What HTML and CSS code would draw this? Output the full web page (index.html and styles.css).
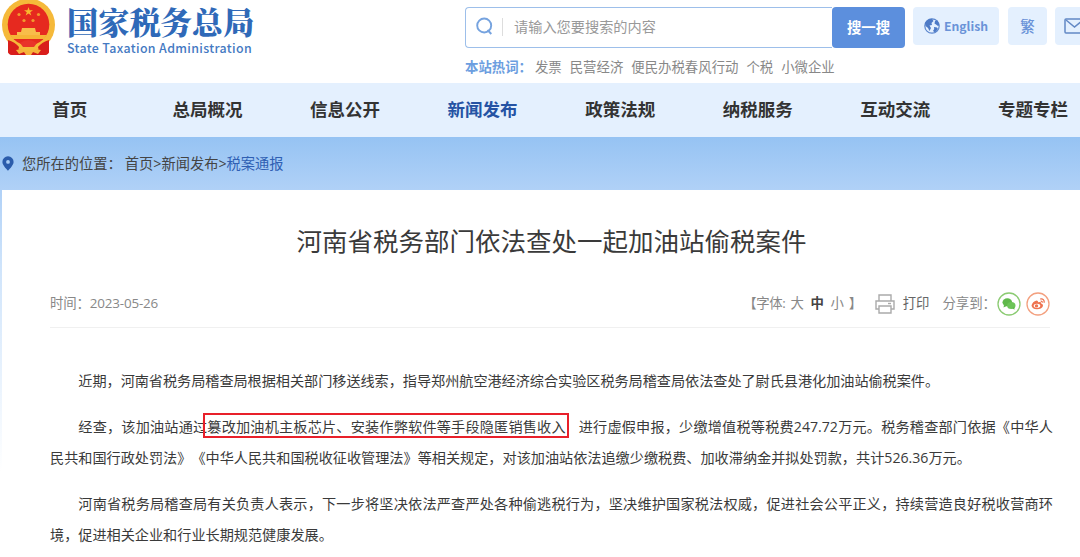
FILE: index.html
```html
<!DOCTYPE html>
<html lang="zh-CN">
<head>
    <meta charset="UTF-8" />
    <meta name="viewport" content="width=device-width, initial-scale=1.0" />
    <title>河南省税务部门依法查处一起加油站偷税案件</title>
    <link rel="stylesheet" href="styles.css">
</head>
<body>
    <header class="header">
        <a class="logo">
            <svg class="emblem" viewBox="0 0 56 56">
                <path d="M9 40 L8 52 Q9 55 14 55 H43 Q48 55 49 52 L48 40Z" fill="#cf1c1a"/>
                <circle cx="28.5" cy="25" r="26.5" fill="#f5b93a"/>
                <circle cx="28.5" cy="24.5" r="20.8" fill="#e6291f"/>
                <path d="M28.5 7l1.1 3.3h3.4l-2.8 2 1.1 3.3-2.8-2-2.8 2 1.1-3.3-2.8-2h3.4z" fill="#f9b92f"/>
                <g fill="#f29a2e">
                    <circle cx="19" cy="14.5" r="1.6"/>
                    <circle cx="38.5" cy="14.5" r="1.6"/>
                    <circle cx="24" cy="20.5" r="1.6"/>
                    <circle cx="33" cy="20.5" r="1.6"/>
                </g>
                <path d="M22 28h13l1 4h4v3H17v-3h4z" fill="#f8bd4a"/>
                <path d="M10 35h37l-3 4H13z" fill="#f6b437"/>
                <path d="M8 40q7 2 11 7l-2 8h-5q-3 0-4-3zM49 40q-7 2-11 7l2 8h5q3 0 4-3z" fill="#d91e1b"/>
                <path d="M20 43q8-6 17 0l-3 4H23z" fill="#e9342a"/>
                <path d="M16 50l6-1 2 2h9l2-2 6 1-3 4-5-2-2 3h-5l-2-3-5 2z" fill="#f6b33b"/>
            </svg>
            <span class="logo-text">
                <span class="logo-cn">国家税务总局</span>
                <span class="logo-en">State Taxation Administration</span>
            </span>
        </a>

        <div class="search">
            <div class="search-row">
                <div class="search-box">
                    <svg class="search-icon" viewBox="0 0 17 19" fill="none" stroke="#76a3df" stroke-width="1.9">
                        <circle cx="8.2" cy="8.5" r="7"/>
                        <path d="M11.5 13l3.8 4"/>
                    </svg>
                    <span class="search-hint">请输入您要搜索的内容</span>
                </div>
                <button class="search-btn">搜一搜</button>
                <a class="tool tool-en">
                    <svg class="globe" viewBox="0 0 16 16">
                        <circle cx="8" cy="8" r="7.2" fill="#e4f0fe" stroke="#5b86cd" stroke-width="1.2"/>
                        <path d="M1 5Q3 1 8 .8L9.5 3 7.5 5 8 7 5.5 7.5 7 10 5.5 13 4 10 1.5 8zM11 3l2.5-.5L15.4 7l-1.4 1-2-1.5-1.5-1zM10 9l3 .5 1 1.5-3 3.5-2-1.5 1.2-2z" fill="#4d7ac6"/>
                    </svg>
                    English
                </a>
                <a class="tool tool-fan">繁</a>
                <a class="tool tool-mail">
                    <svg class="mail" viewBox="0 0 21 16" fill="none" stroke="#6288c5" stroke-width="1.5">
                        <rect x="1" y="1" width="19" height="14" rx="1"/>
                        <path d="M2 2l8.5 7L19 2"/>
                    </svg>
                </a>
            </div>
            <div class="hot">
                <b>本站热词：</b><a>发票</a><a>民营经济</a><a>便民办税春风行动</a><a>个税</a><a>小微企业</a>
            </div>
        </div>
    </header>

    <nav class="nav">
        <a>首页</a>
        <a>总局概况</a>
        <a>信息公开</a>
        <a class="active">新闻发布</a>
        <a>政策法规</a>
        <a>纳税服务</a>
        <a>互动交流</a>
        <a>专题专栏</a>
    </nav>

    <main class="main">
        <div class="crumbs">
            <svg class="pin" viewBox="0 0 12 15">
                <path d="M6 .3A5.6 5.6 0 0 0 .4 6C.4 9.5 6 14.7 6 14.7S11.6 9.5 11.6 6A5.6 5.6 0 0 0 6 .3z" fill="#2b5cab"/>
                <circle cx="6" cy="5.9" r="1.9" fill="#a9cdf5"/>
            </svg>
            <span class="crumbs-label">您所在的位置：</span>
            <span class="crumbs-path">首页&gt;新闻发布&gt;<a>税案通报</a></span>
        </div>

        <article class="article">
            <h1>河南省税务部门依法查处一起加油站偷税案件</h1>
            <div class="meta">
                <span class="date">时间：2023-05-26</span>
                <span class="fontsize">【字体: <a>大</a> <b>中</b> <a>小</a> 】</span>
                <svg class="printer" viewBox="0 0 20 20" fill="none" stroke="#aaa" stroke-width="1.4">
                    <path d="M4 7V1h12v6M4 15H1V7h18v8h-3M4 12h12v7H4z"/>
                    <path d="M13 9.5h3"/>
                </svg>
                <span class="print">打印</span>
                <span class="share">分享到：</span>
                <svg class="round" viewBox="0 0 24 24">
                    <circle cx="12" cy="12" r="11" fill="#fff" stroke="#8bcb72" stroke-width="1.3"/>
                    <ellipse cx="10.3" cy="10.3" rx="4.8" ry="4" fill="#5fb84a"/>
                    <ellipse cx="14.3" cy="13.4" rx="4.2" ry="3.5" fill="#6cc457"/>
                    <path d="M7 13l-.5 2.5 3-1.5zM15 16l2.5 1.8-.3-3z" fill="#5fb84a"/>
                </svg>
                <svg class="round" viewBox="0 0 24 24">
                    <circle cx="12" cy="12" r="11" fill="#fff" stroke="#f3a07f" stroke-width="1.3"/>
                    <path d="M5.5 13.5Q6.5 9.5 10.5 8.5 12.5 8.5 12 10.2 15.5 9.5 15.2 11.5 17.5 12 17 14 15.500 17.3 11 17.3 6 17 5.5 13.5z" fill="#ee7350"/>
                    <ellipse cx="11" cy="13.8" rx="3.3" ry="2.1" fill="#fff"/>
                    <circle cx="10.5" cy="13.9" r="1.7" fill="#ee7350"/>
                    <path d="M14.3 7Q18.5 6.3 18.2 10.8M14.7 9.1q1.7-.1 1.6 1.5" fill="none" stroke="#ee7350" stroke-width="1.3"/>
                </svg>
            </div>

            <div class="content">
                <p class="single">近期，河南省税务局稽查局根据相关部门移送线索，指导郑州航空港经济综合实验区税务局稽查局依法查处了尉氏县港化加油站偷税案件。</p>
                <p>经查，该加油站通过<mark>篡改加油机主板芯片、安装作弊软件等手段隐匿销售收入</mark>进行虚假申报，少缴增值税等税费247.72万元。税务稽查部门依据《中华人民共和国行政处罚法》《中华人民共和国税收征收管理法》等相关规定，对该加油站依法追缴少缴税费、加收滞纳金并拟处罚款，共计526.36万元。</p>
                <p>河南省税务局稽查局有关负责人表示，下一步将坚决依法严查严处各种偷逃税行为，坚决维护国家税法权威，促进社会公平正义，持续营造良好税收营商环境，促进相关企业和行业长期规范健康发展。</p>
            </div>
        </article>
    </main>
</body>
</html>
```

FILE: styles.css
```css
* {
    box-sizing: border-box;
}

body {
    margin: 0;
    height: 557px;
    overflow: hidden;
    background: #fff;
    color: #3a3a3a;
    font-family: "Open Sans", "Noto Sans CJK SC", sans-serif;
    font-size: 14px;
    text-spacing-trim: space-all;
    white-space: nowrap;
}

svg {
    display: block;
    flex: none;
}

.header {
    display: flex;
    height: 83px;
}

.logo {
    display: flex;
    width: 465px;
    flex: none;
}

.emblem {
    width: 56px;
    height: 56px;
}

.logo-text {
    display: flex;
    flex-direction: column;
    padding: 3px 0 0 11px;
    color: #2f69b8;
}

.logo-cn {
    font-family: "Noto Serif CJK SC", "Noto Sans CJK SC", serif;
    font-size: 31.2px;
    font-weight: 900;
    line-height: 36px;
}

.logo-en {
    color: #4479c2;
    font-family: "Noto Sans CJK SC", sans-serif;
    font-size: 12.4px;
    font-weight: 500;
    line-height: 18px;
    letter-spacing: 0.35px;
}

.search {
    flex: none;
    padding-top: 7px;
}

.search-row {
    display: flex;
}

.search-box {
    display: flex;
    align-items: center;
    width: 367px;
    height: 41px;
    padding: 0 0 2px 10px;
    border: 1px solid #9dbfea;
    border-right: 0;
    border-radius: 4px 0 0 4px;
}

.search-icon {
    width: 17px;
    height: 19px;
}

.search-hint {
    margin-left: 9px;
    padding-left: 11px;
    border-left: 1px solid #ddd;
    color: #999;
    font-size: 14.2px;
    line-height: 18px;
}

.search-btn {
    width: 73px;
    height: 41px;
    padding: 0 0 2px;
    border: 0;
    border-radius: 4px;
    background: #5c8fdd;
    color: #fff;
    font: bold 14.4px "Noto Sans CJK SC", sans-serif;
}

.tool {
    display: flex;
    align-items: center;
    justify-content: center;
    height: 38px;
    margin-left: 9px;
    border-radius: 4px;
    background: #e4f0fe;
    color: #6a93d8;
    font-family: "Noto Sans CJK SC", sans-serif;
    font-weight: bold;
}

.tool-en {
    gap: 4px;
    width: 86px;
    margin-left: 8px;
    font-size: 12.2px;
}

.tool-fan {
    width: 39px;
    padding-bottom: 2px;
    font-weight: 500;
    font-size: 14.5px;
}

.tool-mail {
    justify-content: flex-start;
    width: 39px;
    margin-left: 8px;
    padding-left: 9px;
}

.globe {
    width: 16px;
    height: 16px;
}

.mail {
    width: 21px;
    height: 16px;
}

.hot {
    display: flex;
    gap: 8px;
    margin-top: 9px;
    color: #888;
    font-size: 13.4px;
    line-height: 20px;
}

.hot b {
    margin-right: -5px;
    color: #6c9ee0;
}

.nav {
    display: grid;
    grid-template-columns: repeat(8, 137.6px);
    height: 54px;
    padding-left: 1px;
    background: #e4f0fe;
    color: #333;
    font-size: 17.5px;
    font-weight: bold;
    line-height: 53px;
    text-align: center;
}

.nav .active {
    color: #2553a4;
}

.main {
    height: 420px;
    padding-left: 2px;
    background: linear-gradient(#96c3f3, #b0d1f7 53px, #cfe4fb 130px, #fff 335px);
}

.crumbs {
    display: flex;
    align-items: center;
    height: 53px;
    color: #444;
    font-size: 14.25px;
}

.crumbs a {
    color: #2f5fb3;
}

.pin {
    width: 12px;
    height: 15px;
}

.crumbs-label,
.crumbs-path {
    padding-bottom: 3px;
}

.crumbs-label {
    margin: 0 3px 0 8px;
}

.article {
    height: 367px;
    padding: 0 27px 0 48px;
    background: #fff;
}

h1 {
    margin: 0;
    padding-top: 30px;
    font-size: 25.5px;
    font-weight: normal;
    line-height: 42px;
    text-align: center;
}

.meta {
    display: flex;
    align-items: center;
    height: 66px;
    padding-top: 18px;
    margin-right: 3px;
    border-bottom: 1px solid #f0f0f0;
    color: #888;
    font-size: 13.4px;
}

.meta span {
    padding-bottom: 3px;
}

.date {
    margin-right: auto;
    letter-spacing: -0.15px;
}

.fontsize {
    letter-spacing: -0.4px;
}

.fontsize b,
.fontsize a {
    margin: 0 2px;
}

.fontsize b {
    color: #444;
}

.printer {
    width: 20px;
    height: 20px;
    margin: 0 8px 0 13px;
}

.meta .print {
    color: #666;
}

.share {
    margin: 0 1px 0 13px;
}

.round {
    width: 24px;
    height: 24px;
}

.round + .round {
    margin-left: 5px;
}

.content {
    padding-top: 37px;
    font-size: 14.15px;
    line-height: 31px;
    white-space: normal;
}

.content p {
    margin: 0 0 15px;
    text-align: justify;
    text-indent: 2em;
}

.content .single {
    letter-spacing: -0.03px;
}

mark {
    margin: 0 10px 0 -4px;
    padding: 2px 1px 0 2px;
    border: 2px solid #e8202a;
    background: none;
    color: inherit;
}
```
